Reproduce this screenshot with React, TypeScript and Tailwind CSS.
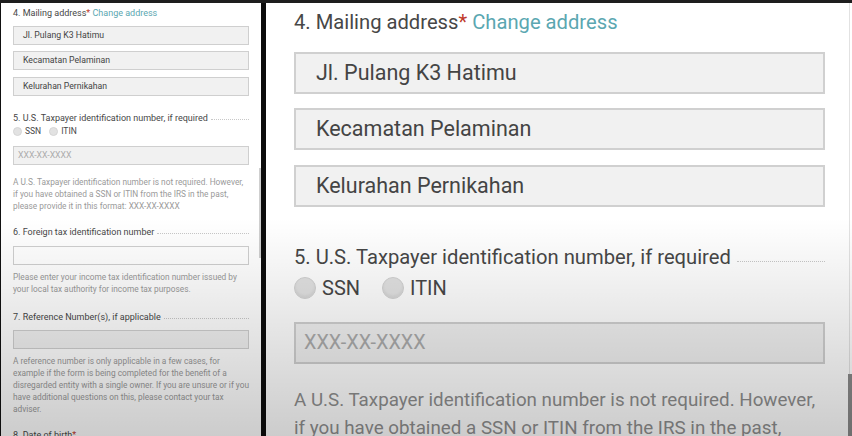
import React from 'react';

const Radio: React.FC<{ big?: boolean; label: string }> = ({ big, label }) => (
  <span className={big ? 'flex items-center gap-[6px] mr-[22px]' : 'flex items-center gap-[3px] mr-[8px]'}>
    <span
      className={
        big
          ? 'inline-block w-[22px] h-[22px] rounded-full bg-[#e2e2e2] border border-[#d2d2d2] shadow-[inset_0_-2px_3px_rgba(0,0,0,0.06)]'
          : 'inline-block w-[9px] h-[9px] rounded-full bg-[#e2e2e2] border border-[#d6d6d6]'
      }
    />
    <span>{label}</span>
  </span>
);

const Heading: React.FC<{ big?: boolean; children: React.ReactNode; line?: boolean; className?: string }> = ({
  big,
  children,
  line = true,
  className = '',
}) => (
  <div
    className={`flex items-center ${
      big ? 'text-[20.2px] leading-[30px] gap-[6px]' : 'text-[9px] leading-[14px] gap-[3px]'
    } text-[#474747] whitespace-nowrap ${className}`}
  >
    <span>{children}</span>
    {line && (
      <span
        className={`flex-1 border-t border-dotted border-[#c8c8c8] ${big ? 'mt-[8px]' : 'mt-[2px]'}`}
      />
    )}
  </div>
);

const LeftPanel: React.FC = () => {
  const box = 'h-[19px] border border-[#cfcfcf] flex items-center text-[8.7px] text-[#444]';
  const help = 'text-[8.3px] leading-[12px] text-[#9a9a9a]';
  return (
    <div className="relative w-[261px] border-l border-[#111] bg-white pl-[12px] pr-[12px] pt-[3px] overflow-hidden">
      <Heading line={false}>
        4. Mailing address<span className="text-[#c0392b]">*</span>{' '}
        <span className="text-[#5ba7b1]">Change address</span>
      </Heading>
      <div className={`${box} px-[9px] bg-[#f1f1f1] mt-[6px]`}>Jl. Pulang K3 Hatimu</div>
      <div className={`${box} px-[9px] bg-[#f1f1f1] mt-[6px]`}>Kecamatan Pelaminan</div>
      <div className={`${box} px-[9px] bg-[#f1f1f1] mt-[7px]`}>Kelurahan Pernikahan</div>

      <Heading className="mt-[15px]">5. U.S. Taxpayer identification number, if required</Heading>
      <div className="flex items-center h-[12px] text-[8.5px] text-[#474747]">
        <Radio label="SSN" />
        <Radio label="ITIN" />
      </div>
      <div className={`${box} px-[4px] bg-[#f1f1f1] mt-[9px] text-[#ababab] text-[8.3px]`}>XXX-XX-XXXX</div>
      <p className={`${help} mt-[11px]`}>
        A U.S. Taxpayer identification number is not required. However, if you have obtained a SSN or ITIN from the
        IRS in the past, please provide it in this format: XXX-XX-XXXX
      </p>

      <Heading className="mt-[13px]">6. Foreign tax identification number</Heading>
      <div className={`${box} bg-white mt-[7px]`} />
      <p className={`${help} mt-[6px]`}>
        Please enter your income tax identification number issued by your local tax authority for income tax
        purposes.
      </p>

      <Heading className="mt-[15px]">7. Reference Number(s), if applicable</Heading>
      <div className={`${box} bg-[#f1f1f1] mt-[6px]`} />
      <p className={`${help} mt-[6px]`}>
        A reference number is only applicable in a few cases, for example if the form is being completed for the
        benefit of a disregarded entity with a single owner. If you are unsure or if you have additional questions on
        this, please contact your tax adviser.
      </p>

      <Heading line={false} className="mt-[13px]">
        8. Date of birth<span className="text-[#c0392b]">*</span>
      </Heading>

      <div className="absolute right-0 top-[165px] h-[90px] w-[2px] bg-[#cfcfcf]" />
    </div>
  );
};

const RightPanel: React.FC = () => {
  const box = 'h-[42px] border-2 border-[#d0d0d0] flex items-center text-[#444]';
  return (
    <div className="relative flex-1 bg-white pl-[28px] pr-[27px] pt-[4px] overflow-hidden">
      <Heading big line={false}>
        4. Mailing address<span className="text-[#c0392b]">*</span>{' '}
        <span className="text-[#5ba7b1]">Change address</span>
      </Heading>
      <div className={`${box} px-[20px] text-[21.5px] bg-[#f1f1f1] mt-[15px]`}>Jl. Pulang K3 Hatimu</div>
      <div className={`${box} px-[20px] text-[21.5px] bg-[#f1f1f1] mt-[14px]`}>Kecamatan Pelaminan</div>
      <div className={`${box} px-[20px] text-[21.5px] bg-[#f1f1f1] mt-[15px]`}>Kelurahan Pernikahan</div>

      <Heading big className="mt-[35px]">
        5. U.S. Taxpayer identification number, if required
      </Heading>
      <div className="flex items-center h-[26px] mt-[3px] text-[20px] text-[#474747]">
        <Radio big label="SSN" />
        <Radio big label="ITIN" />
      </div>
      <div className={`${box} px-[8px] text-[19.8px] bg-[#f1f1f1] mt-[21px] text-[#ababab]`}>XXX-XX-XXXX</div>
      <p className="text-[18.8px] leading-[28px] text-[#8f8f8f] mt-[22px]">
        A U.S. Taxpayer identification number is not required. However, if you have obtained a SSN or ITIN from the
        IRS in the past, please provide it in this format: XXX-XX-XXXX
      </p>

      <div className="absolute right-[2px] top-0 bottom-0 w-[1px] bg-[#e2e2e2]" />
      <div className="absolute right-0 top-[371px] bottom-0 w-[4px] bg-[#8a8a8a]" />
    </div>
  );
};

export default function App() {
  return (
    <div className="relative w-[852px] h-[436px] overflow-hidden bg-white font-[Roboto,sans-serif]">
      <div className="h-[3px] bg-[#1e1e1e]" />
      <div className="flex h-[433px]">
        <LeftPanel />
        <div className="w-[5px] bg-[#0c0c0c]" />
        <RightPanel />
      </div>
      <div className="pointer-events-none absolute inset-0 bg-linear-to-b from-transparent from-[50%] to-black/20" />
    </div>
  );
}
